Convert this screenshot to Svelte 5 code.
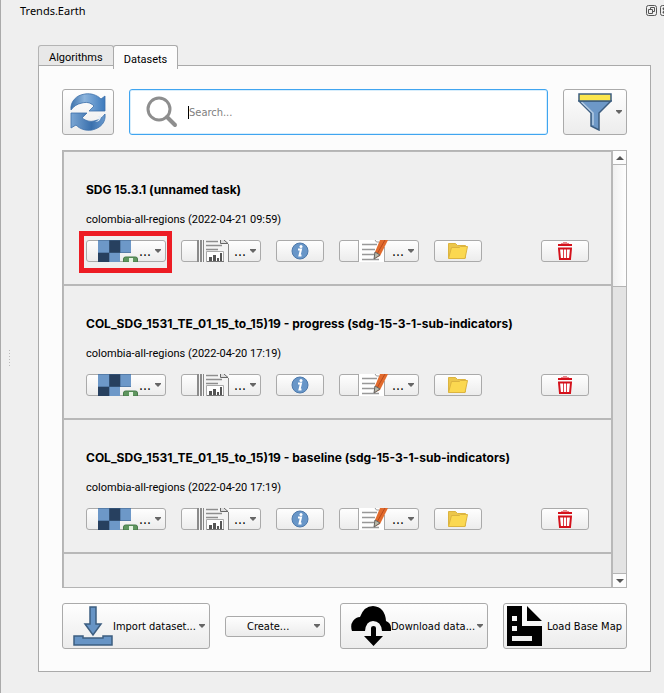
<script lang="ts">
    type Dataset = { name: string; details: string; highlighted?: boolean };

    const datasets: Dataset[] = [
        {
            name: "SDG 15.3.1 (unnamed task)",
            details: "colombia-all-regions (2022-04-21 09:59)",
            highlighted: true,
        },
        {
            name: "COL_SDG_1531_TE_01_15_to_15)19 - progress (sdg-15-3-1-sub-indicators)",
            details: "colombia-all-regions (2022-04-20 17:19)",
        },
        {
            name: "COL_SDG_1531_TE_01_15_to_15)19 - baseline (sdg-15-3-1-sub-indicators)",
            details: "colombia-all-regions (2022-04-20 17:19)",
        },
    ];

    const tabs = ["Algorithms", "Datasets"];

    let activeTab = $state("Datasets");
    let search = $state("");
</script>

{#snippet arrow()}
    <svg class="arrow" width="6" height="4" viewBox="0 0 6 4" aria-hidden="true">
        <path d="M0 0h6v1L3 4 0 1z" fill="#666" />
    </svg>
{/snippet}

<div class="dock">
    <header>
        <h1>Trends.Earth</h1>
        <div class="window-buttons">
            <button aria-label="Float">
                <svg width="11" height="11" viewBox="0 0 11 11" fill="none" stroke="#555">
                    <rect x=".5" y=".5" width="10" height="10" rx="2" />
                    <path d="M4.500 4V2.500h4v4H7M2.500 4.500h4v4h-4z" />
                </svg>
            </button>
            <button aria-label="Close">
                <svg width="11" height="11" viewBox="0 0 11 11" fill="none" stroke="#555">
                    <rect x=".5" y=".5" width="10" height="10" rx="2" />
                    <path d="M3 3l5 5M8 3L3 8" stroke-width="2" />
                </svg>
            </button>
        </div>
    </header>

    <div class="grip" aria-hidden="true"></div>

    <nav role="tablist">
        {#each tabs as tab}
            <button
                role="tab"
                class:active={activeTab === tab}
                aria-selected={activeTab === tab}
                onclick={() => (activeTab = tab)}>{tab}</button>
        {/each}
    </nav>

    <main>
        <div class="toolbar">
            <button class="push refresh" aria-label="Refresh">
                <svg width="36" height="38" viewBox="0 0 36 38">
                    <defs>
                        <linearGradient id="blue-top" x1="0" y1="0" x2="1" y2="0">
                            <stop offset="0" stop-color="#3f74ad" />
                            <stop offset=".4" stop-color="#8db4dc" />
                            <stop offset="1" stop-color="#3c7abd" />
                        </linearGradient>
                        <linearGradient id="blue-bottom" x1="0" y1="0" x2="1" y2="0">
                            <stop offset="0" stop-color="#7ba6d3" />
                            <stop offset=".6" stop-color="#3a70ad" />
                            <stop offset="1" stop-color="#6b9bcf" />
                        </linearGradient>
                    </defs>
                    <path
                        d="M1 17C0 9 6 2 15 1c6-1 12 1 16 5l4-3v15H19l5-5c-4-4-8-4-12-3-5 1-8 3-11 7z"
                        fill="url(#blue-top)" stroke="#3d70aa" stroke-width=".8" />
                    <path
                        d="M35 21c1 8-4 14-13 16-7 1-12-1-16-5l-5 3V20h16l-5 5c4 3 8 4 12 3 5-1 8-3 11-7z"
                        fill="url(#blue-bottom)" stroke="#3d70aa" stroke-width=".8" />
                    <path d="M28 23c2 3 0 5-3 6 4 0 6-3 6-6z" fill="#e5eef7" />
                </svg>
            </button>

            <label class="search">
                <svg width="32" height="32" viewBox="0 0 32 32" fill="none" stroke="#8e8e8e">
                    <circle cx="13" cy="13" r="11" stroke-width="3" />
                    <path d="M21 21l8 8" stroke-width="4" stroke-linecap="round" />
                </svg>
                <span class="caret"></span>
                <input type="text" placeholder="Search..." aria-label="Search" bind:value={search}>
            </label>

            <button class="push filter" aria-label="Filter">
                <svg width="34" height="38" viewBox="0 0 34 38" stroke="#3d5e80" stroke-width="1.500">
                    <path d="M1 8h32L21 20v17l-8-4V20z" fill="#6d98c7" />
                    <path d="M3.500 9L15 20v12" fill="none" stroke="#b4cbe3" />
                    <path d="M1 1h32v7H1z" fill="#fbe64d" />
                </svg>
                {@render arrow()}
            </button>
        </div>

        <div class="list">
            <div class="rows">
                {#each datasets as dataset}
                    <article>
                        <h2>{dataset.name}</h2>
                        <p>{dataset.details}</p>

                        <div class="actions">
                            <div class="load">
                                <button class="push menu" aria-label="Load dataset">
                                    <svg width="41" height="22" viewBox="0 0 41 22">
                                        <path d="M0 0h33v13H22v9H0z" fill="#6d98c8" />
                                        <path d="M11 0h11v13H11zM0 13h11v9H0z" fill="#27405f" />
                                        <path d="M0 .5h33M0 12.500h33M11.500 0v22M22.500 0v13" stroke="#40618a" stroke-opacity=".5" />
                                        <path d="M25.500 22v-3q0-2 2-2h10q2 0 2 2v3z" fill="#5f965f" stroke="#477a48" />
                                        <path d="M31 18h4v4h-4z" fill="#e6f3e3" />
                                    </svg>
                                    <span>...</span>
                                    {@render arrow()}
                                </button>
                                {#if dataset.highlighted}
                                    <div class="highlight"></div>
                                {/if}
                            </div>

                            <button class="push menu" aria-label="Reports">
                                <svg width="41" height="22" viewBox="0 0 41 22">
                                    <path d="M4 0h2v22H4zM7 0h2v22H7z" fill="#8b8b8b" />
                                    <path d="M6 0h1v22H6zM9 0h27v22H9z" fill="#f4f4f4" />
                                    <path d="M10.500 0v22M35.500 4v18" stroke="#888" />
                                    <path d="M13 1.500h12M13 5.500h16M13 9.500h12" stroke="#8e8e8e" stroke-width="1.500" />
                                    <path d="M27.500 0v3.500H35L31 0" fill="#ddd" stroke="#666" />
                                    <path d="M13.500 11.500h17V22h-17z" fill="#fff" stroke="#aaa" />
                                    <path d="M16 17h3v4h-3zM20 15h3v6h-3zM24 18h2v3h-2zM27 13h2v8h-2z" fill="#555" />
                                    <path d="M14 21.500h17" stroke="#777" />
                                </svg>
                                <span>...</span>
                                {@render arrow()}
                            </button>

                            <button class="push small" aria-label="Details">
                                <svg width="18" height="18" viewBox="0 0 18 18">
                                    <circle cx="9" cy="9" r="8" fill="#6896c8" stroke="#4d79ab" />
                                    <circle cx="10" cy="4.500" r="1.500" fill="#fff" />
                                    <path d="M7 7.500h3L8.500 13.500h2" fill="none" stroke="#fff" stroke-width="2" />
                                </svg>
                            </button>

                            <button class="push menu" aria-label="Edit">
                                <svg width="41" height="22" viewBox="0 0 41 22">
                                    <path d="M7 0h27v22H7z" fill="#fff" />
                                    <path d="M7.500 0v22M33.500 7v15" stroke="#aaa" />
                                    <path d="M11 4.500h15M11 9.500h13M11 14.500h13M11 19.500h17" stroke="#999" stroke-width="1.500" />
                                    <path d="M24 0q1 3 4 2" fill="none" stroke="#999" />
                                    <path d="M29 0h8L29 16l-6 3 1-7z" fill="#e16b2d" />
                                    <path d="M34 0L26 14" stroke="#b94a1e" />
                                    <path d="M24 12l5 3-6 4z" fill="#b9b9a9" stroke="#666" />
                                </svg>
                                <span>...</span>
                                {@render arrow()}
                            </button>

                            <button class="push small" aria-label="Open directory">
                                <svg width="20" height="16" viewBox="0 0 20 16" stroke="#dcb440">
                                    <path d="M.5 15V.5h7l2 2h8V15z" fill="#ecc64a" />
                                    <path d="M.5 15.500l3-11h8l1-1h7l-2.500 12z" fill="#fbd850" />
                                </svg>
                            </button>

                            <button class="push small delete" aria-label="Delete">
                                <svg width="14" height="18" viewBox="0 0 14 18" fill="none" stroke="#d4111b">
                                    <path d="M5 .5h4M3 1.500h8" stroke-opacity=".5" />
                                    <path d="M0 3h14" stroke-width="2" />
                                    <path d="M1 6.500h12L12 17H2z" fill="#fff" stroke-width="2" />
                                    <path d="M5.500 7v9M8.500 7v9" stroke-opacity=".8" />
                                </svg>
                            </button>
                        </div>
                    </article>
                {/each}
                <article></article>
            </div>

            <div class="scrollbar">
                <button aria-label="Scroll up">
                    <svg width="8" height="4" viewBox="0 0 8 4"><path d="M4 0l4 4H0z" fill="#555" /></svg>
                </button>
                <div class="track"><div class="thumb"></div></div>
                <button aria-label="Scroll down">
                    <svg width="8" height="4" viewBox="0 0 8 4"><path d="M4 4L0 0h8z" fill="#555" /></svg>
                </button>
            </div>
        </div>

        <footer>
            <button class="push wide">
                <svg width="40" height="40" viewBox="0 0 40 40" fill="#6794c5" stroke="#3d5e80" stroke-width="1.500">
                    <path d="M17 1h6v17h5l-8 11-8-11h5z" />
                    <path d="M1 30h9v2h20v-2h9v9H1z" />
                </svg>
                <span>Import dataset...</span>
                {@render arrow()}
            </button>

            <button class="push create">
                <span>Create...</span>
                {@render arrow()}
            </button>

            <button class="push wide">
                <svg width="40" height="40" viewBox="0 0 40 40">
                    <path d="M1 25Q-1 19 2 15q3-4 7-4Q13 0 22 0q12 1 13 15 5 2 5 7v3h-9q-1-10-9-10-7 0-8 10z" />
                    <path d="M20 22q0-2 2.500-2t2.500 2v8h7l-9.500 10L13 30h7z" />
                </svg>
                <span>Download data...</span>
                {@render arrow()}
            </button>

            <button class="push basemap">
                <svg width="36" height="40" viewBox="0 0 36 40">
                    <path
                        fill-rule="evenodd"
                        d="M0 0h15v20h20v20H0zM5 10v5h5v-5zM5 20v5h5v-5zM5 30v5h20v-5zM20 0l15 15H20z" />
                </svg>
                <span>Load Base Map</span>
            </button>
        </footer>
    </main>
</div>

<style>
    :global(body) {
        background: #efefef;
    }

    .dock {
        position: relative;
        box-sizing: border-box;
        height: 100vh;
        display: flex;
        flex-direction: column;
        padding: 0 13px 21px 37px;
        border-left: 1px solid #aaa;
        font: 11px/14px "DejaVu Sans Condensed", "Noto Sans", sans-serif;
        color: #000;
        overflow: hidden;
    }

    button {
        font: inherit;
        color: inherit;
        padding: 0;
        border: 0;
        background: none;
    }

    svg {
        display: block;
        flex: none;
    }

    header {
        display: flex;
        justify-content: space-between;
        margin: 4px -20px 27px -18px;
    }

    h1 {
        margin: 0;
        font-family: "Noto Sans", sans-serif;
        font-size: 11px;
        font-weight: normal;
    }

    .window-buttons {
        display: flex;
        align-items: flex-start;
        gap: 3px;
        padding-top: 1px;
    }

    .grip {
        position: absolute;
        left: 8px;
        top: 50%;
        width: 1px;
        height: 18px;
        margin-top: 3px;
        background: repeating-linear-gradient(#bbb 0 1px, transparent 1px 3px);
    }

    nav {
        display: flex;
        align-items: flex-end;
    }

    nav button {
        height: 20px;
        padding: 4px 10px 0;
        border: 1px solid #b4b4b4;
        border-bottom: 0;
        border-radius: 3px 3px 0 0;
        background: #e8e8e8;
        font-family: Roboto, sans-serif;
    }

    nav button.active {
        position: relative;
        height: 24px;
        margin: 0 0 -4px -1px;
        border-color: #aaa;
        background: #fcfcfc;
    }

    main {
        flex: 1;
        min-height: 0;
        display: flex;
        flex-direction: column;
        gap: 15px;
        padding: 23px 23px 22px;
        border: 1px solid #aaa;
        background: #fcfcfc;
    }

    .push {
        box-sizing: border-box;
        display: flex;
        align-items: center;
        border: 1px solid #aaa;
        border-radius: 3px;
        background: linear-gradient(#fefefe, #ececec);
    }

    .toolbar {
        display: flex;
        gap: 15px;
        height: 46px;
    }

    .refresh {
        width: 52px;
        justify-content: center;
    }

    .filter {
        width: 64px;
        padding: 0 4px 0 14px;
        justify-content: space-between;
    }

    .search {
        flex: 1;
        display: flex;
        align-items: center;
        padding-left: 16px;
        border: 1px solid #40a5f0;
        border-radius: 3px;
        box-shadow: inset 0 0 0 1px #d8eefc;
        background: #fff;
    }

    .caret {
        width: 1px;
        height: 13px;
        margin-left: 10px;
        background: #000;
    }

    .search input {
        flex: 1;
        min-width: 0;
        padding: 2px 0 0;
        border: 0;
        outline: 0;
        background: none;
        font: inherit;
    }

    .search input::placeholder {
        color: #808080;
    }

    .list {
        flex: 1;
        min-height: 0;
        display: flex;
        border: 1px solid #b4b4b4;
        background: #efefef;
    }

    .rows {
        flex: 1;
        min-width: 0;
        overflow: hidden;
        border-right: 2px solid #b8b8b8;
        border-left: 1px solid #b8b8b8;
    }

    article {
        box-sizing: border-box;
        height: 134px;
        padding: 31px 22px 0;
        border-bottom: 2px solid #b8b8b8;
    }

    article:first-child {
        height: 135px;
        border-top: 1px solid #b8b8b8;
    }

    h2 {
        margin: 0 0 16px;
        font-family: Inter, "Noto Sans", sans-serif;
        font-size: 12px;
        font-weight: bold;
        white-space: nowrap;
    }

    p {
        margin: 0 0 13px;
        font-family: Roboto, sans-serif;
        white-space: nowrap;
    }

    .actions {
        display: flex;
        gap: 15px;
    }

    .load {
        position: relative;
    }

    .highlight {
        position: absolute;
        inset: -9px -6px -11px -7px;
        border: 5px solid #ed1c24;
        pointer-events: none;
    }

    .menu {
        width: 80px;
        height: 22px;
        padding: 0 4px 0 11px;
        font-size: 14px;
    }

    .arrow {
        margin-left: auto;
    }

    .small {
        width: 48px;
        height: 22px;
        justify-content: center;
    }

    .delete {
        margin-left: auto;
    }

    .scrollbar {
        width: 13px;
        display: flex;
        flex-direction: column;
    }

    .scrollbar button {
        height: 13px;
        display: flex;
        align-items: center;
        justify-content: center;
        background: #fcfcfc;
    }

    .track {
        flex: 1;
        border: solid #b4b4b4;
        border-width: 1px 0;
        background: #e3e3e3;
    }

    .thumb {
        box-sizing: border-box;
        height: 30%;
        border-bottom: 1px solid #b4b4b4;
        background: linear-gradient(90deg, #f0f0f0, #fefefe);
    }

    footer {
        display: flex;
        align-items: center;
        justify-content: space-between;
        height: 46px;
    }

    footer .push {
        height: 100%;
        white-space: nowrap;
    }

    footer span {
        padding-top: 2px;
    }

    .wide {
        width: 148px;
        padding: 0 4px 0 10px;
    }

    footer .create {
        width: 100px;
        height: 21px;
        padding: 0 4px 0 21px;
    }

    .basemap {
        width: 124px;
        padding-left: 3px;
        gap: 4px;
    }
</style>
